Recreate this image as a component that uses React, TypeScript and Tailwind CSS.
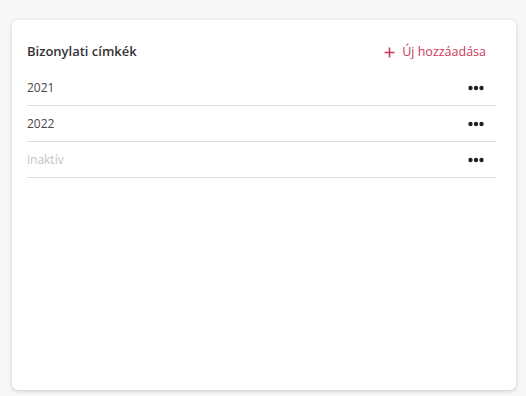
import React from "react";

const rows = [
  { label: "2021", muted: false },
  { label: "2022", muted: false },
  { label: "inaktív", muted: true },
];

function Dots() {
  return (
    <svg width="16" height="6" viewBox="0 0 16 6" className="text-[#222]">
      <circle cx="2.5" cy="3" r="2.2" fill="currentColor" />
      <circle cx="8" cy="3" r="2.2" fill="currentColor" />
      <circle cx="13.5" cy="3" r="2.2" fill="currentColor" />
    </svg>
  );
}

export default function App() {
  return (
    <div
      className="w-[526px] h-[396px] bg-[#f7f7f7] pt-[20px] pl-[12px] pr-[10px]"
      style={{ fontFamily: '"Open Sans", "Noto Sans", sans-serif' }}
    >
      <div className="h-[370px] bg-white rounded-[6px] shadow-[0_1px_4px_rgba(0,0,0,0.18)] pl-[15px] pr-[20px] pt-[14px]">
        <div className="h-[36px] flex items-center justify-between">
          <span className="text-[13px] font-semibold text-[#333]">Bizonylati címkék</span>
          <button className="flex items-center gap-[7px] text-[12.5px] text-[#c9385a] pr-[10px]">
            <svg width="11" height="11" viewBox="0 0 11 11">
              <path d="M5.5 0.5v10M0.5 5.5h10" stroke="#c9385a" strokeWidth="1.6" />
            </svg>
            Új hozzáadása
          </button>
        </div>
        {rows.map((r) => (
          <div
            key={r.label}
            className="h-[36px] flex items-center justify-between border-b border-[#dedede]"
          >
            <span className={`text-[12px] ${r.muted ? "text-[#c4c4c4]" : "text-[#484848]"}`}>
              {r.label}
            </span>
            <span className="pr-[12px] flex items-center">
              <Dots />
            </span>
          </div>
        ))}
      </div>
    </div>
  );
}
